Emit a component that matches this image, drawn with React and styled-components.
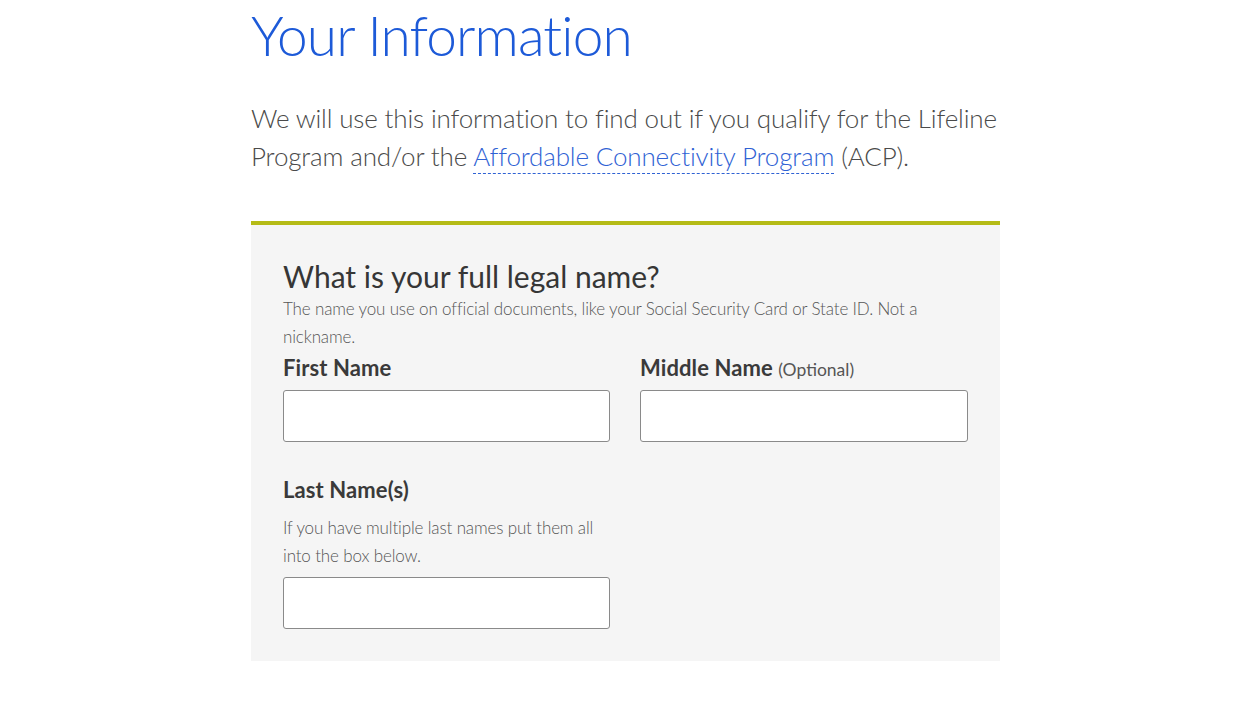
import React from "react";
import styled, { createGlobalStyle } from "styled-components";

const Global = createGlobalStyle`
  html, body { margin: 0; padding: 0; background: #ffffff; }
  body { font-family: Lato, "Noto Sans", "Liberation Sans", sans-serif; color: #454545; }
  * { box-sizing: border-box; }
`;

const Page = styled.main`
  padding: 0 0 40px 251px;
`;

const Column = styled.div`
  width: 749px;
`;

const Title = styled.h1`
  margin: 0;
  padding-top: 5px;
  font-size: 55px;
  line-height: 60px;
  font-weight: 300;
  letter-spacing: -0.9px;
  color: #1d5ad8;
`;

const Intro = styled.p`
  margin: 34px -12px 0 0;
  font-size: 26px;
  line-height: 38px;
  font-weight: 300;
  letter-spacing: -0.15px;
  color: #4a4a4a;
`;

const Link = styled.a`
  color: #2f62d4;
  text-decoration: underline dashed #2f62d4 1px;
  text-underline-offset: 7px;
`;

const Card = styled.section`
  margin-top: 46px;
  border-top: 4px solid #b5bb17;
  background: #f5f5f5;
  padding: 32px 31px 32px 32px;
`;

const Question = styled.h2`
  margin: 0;
  font-size: 30px;
  line-height: 38px;
  font-weight: 400;
  color: #363636;
`;

const Hint = styled.p`
  margin: ${(p) => p.$mt || 0}px 0 0;
  font-size: 17px;
  line-height: 28px;
  font-weight: 300;
  letter-spacing: -0.15px;
  color: #555555;
`;

const Grid = styled.div`
  display: grid;
  grid-template-columns: 327px 328px;
  column-gap: 30px;
  row-gap: 32px;
  margin-top: 1px;
`;

const Field = styled.div`
  display: flex;
  flex-direction: column;
`;

const Label = styled.label`
  font-size: 22px;
  line-height: 32px;
  font-weight: 700;
  letter-spacing: 0.1px;
  color: #3a3a3a;
  margin-bottom: ${(p) => p.$mb ?? 6}px;
`;

const Optional = styled.span`
  font-size: 17.5px;
  line-height: 1;
  font-weight: 400;
  letter-spacing: 0;
  color: #555;
`;

const Input = styled.input`
  display: block;
  width: 100%;
  height: 52px;
  border: 1px solid #8a8a8a;
  border-radius: 3px;
  background: #fff;
  font-size: 18px;
  padding: 0 12px;
  margin: ${(p) => p.$mt || 0}px 0 0;
`;

export default function App() {
  return (
    <>
      <Global />
      <Page>
        <Column>
          <Title>Your Information</Title>
          <Intro>
            We will use this information to find out if you qualify for the Lifeline
            Program and/or the <Link href="#">Affordable Connectivity Program</Link> (ACP).
          </Intro>
          <Card>
            <Question>What is your full legal name?</Question>
            <Hint>
              The name you use on official documents, like your Social Security Card or State ID. Not a
              nickname.
            </Hint>
            <Grid>
              <Field>
                <Label>First Name</Label>
                <Input type="text" />
              </Field>
              <Field>
                <Label>
                  Middle Name <Optional>(Optional)</Optional>
                </Label>
                <Input type="text" />
              </Field>
              <Field>
                <Label $mb={0}>Last Name(s)</Label>
                <Hint $mt={8}>If you have multiple last names put them all into the box below.</Hint>
                <Input type="text" $mt={7} />
              </Field>
            </Grid>
          </Card>
        </Column>
      </Page>
    </>
  );
}
